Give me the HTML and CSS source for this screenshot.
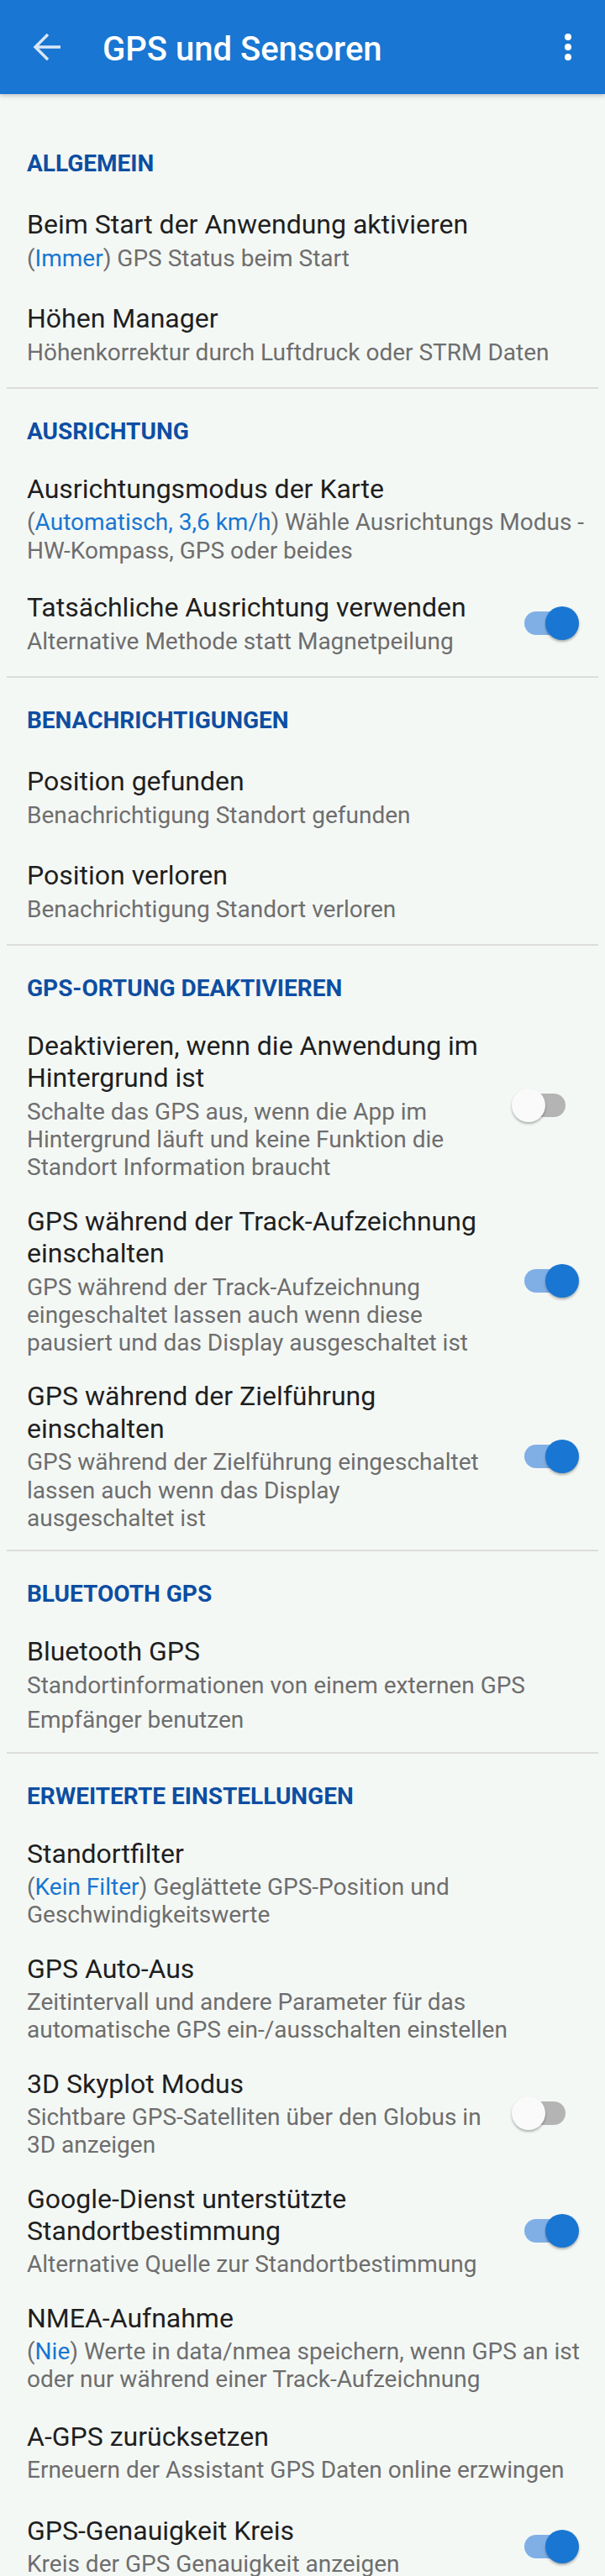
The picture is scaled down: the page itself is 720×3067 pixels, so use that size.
FILE: index.html
```html
<!DOCTYPE html>
<html lang="de">
  <head>
    <meta charset="UTF-8" />
    <meta name="viewport" content="width=device-width, initial-scale=1.0" />
    <title>GPS und Sensoren</title>
    <link rel="stylesheet" href="styles.css">
  </head>
  <body>
    <header class="appbar">
      <button class="appbar-icon back" aria-label="Zurück">
        <svg width="48" height="48" viewBox="0 0 48 48">
          <path d="M9 24H39 M24 9L9 24L24 39" fill="none" stroke="currentColor" stroke-width="3.4" />
        </svg>
      </button>
      <h1 class="appbar-title">GPS und Sensoren</h1>
      <button class="appbar-icon more" aria-label="Mehr">
        <svg width="48" height="48" viewBox="0 0 48 48" fill="currentColor">
          <circle cx="24" cy="12" r="4" />
          <circle cx="24" cy="24" r="4" />
          <circle cx="24" cy="36" r="4" />
        </svg>
      </button>
    </header>

    <main class="settings">
      <!-- Allgemein -->
      <section class="group">
        <h2 class="group-title">Allgemein</h2>
        <div class="pref">
          <div class="pref-text">
            <div class="pref-title">Beim Start der Anwendung aktivieren</div>
            <div class="pref-summary">(<span class="value">Immer</span>) GPS Status beim Start</div>
          </div>
        </div>
        <div class="pref">
          <div class="pref-text">
            <div class="pref-title">Höhen Manager</div>
            <div class="pref-summary">Höhenkorrektur durch Luftdruck oder STRM Daten</div>
          </div>
        </div>
      </section>
      <hr class="divider">

      <!-- Ausrichtung -->
      <section class="group">
        <h2 class="group-title">Ausrichtung</h2>
        <div class="pref">
          <div class="pref-text">
            <div class="pref-title">Ausrichtungsmodus der Karte</div>
            <div class="pref-summary">(<span class="value">Automatisch, 3,6 km/h</span>) Wähle Ausrichtungs Modus - HW-Kompass, GPS oder beides</div>
          </div>
        </div>
        <div class="pref has-switch">
          <div class="pref-text">
            <div class="pref-title">Tatsächliche Ausrichtung verwenden</div>
            <div class="pref-summary">Alternative Methode statt Magnetpeilung</div>
          </div>
          <div class="switch on"><span class="switch-track"></span><span class="switch-thumb"></span></div>
        </div>
      </section>
      <hr class="divider">

      <!-- Benachrichtigungen -->
      <section class="group">
        <h2 class="group-title">Benachrichtigungen</h2>
        <div class="pref">
          <div class="pref-text">
            <div class="pref-title">Position gefunden</div>
            <div class="pref-summary">Benachrichtigung Standort gefunden</div>
          </div>
        </div>
        <div class="pref">
          <div class="pref-text">
            <div class="pref-title">Position verloren</div>
            <div class="pref-summary">Benachrichtigung Standort verloren</div>
          </div>
        </div>
      </section>
      <hr class="divider">

      <!-- GPS-Ortung deaktivieren -->
      <section class="group">
        <h2 class="group-title">GPS-Ortung deaktivieren</h2>
        <div class="pref has-switch">
          <div class="pref-text">
            <div class="pref-title">Deaktivieren, wenn die Anwendung im Hintergrund ist</div>
            <div class="pref-summary">Schalte das GPS aus, wenn die App im Hintergrund läuft und keine Funktion die Standort Information braucht</div>
          </div>
          <div class="switch"><span class="switch-track"></span><span class="switch-thumb"></span></div>
        </div>
        <div class="pref has-switch">
          <div class="pref-text">
            <div class="pref-title">GPS während der Track-Aufzeichnung einschalten</div>
            <div class="pref-summary">GPS während der Track-Aufzeichnung eingeschaltet lassen auch wenn diese pausiert und das Display ausgeschaltet ist</div>
          </div>
          <div class="switch on"><span class="switch-track"></span><span class="switch-thumb"></span></div>
        </div>
        <div class="pref has-switch">
          <div class="pref-text">
            <div class="pref-title">GPS während der Zielführung einschalten</div>
            <div class="pref-summary">GPS während der Zielführung eingeschaltet lassen auch wenn das Display ausgeschaltet ist</div>
          </div>
          <div class="switch on"><span class="switch-track"></span><span class="switch-thumb"></span></div>
        </div>
      </section>
      <hr class="divider">

      <!-- Bluetooth GPS -->
      <section class="group">
        <h2 class="group-title">Bluetooth GPS</h2>
        <div class="pref">
          <div class="pref-text">
            <div class="pref-title">Bluetooth GPS</div>
            <div class="pref-summary">Standortinformationen von einem externen GPS <span class="next-line">Empfänger benutzen</span></div>
          </div>
        </div>
      </section>
      <hr class="divider">

      <!-- Erweiterte Einstellungen -->
      <section class="group">
        <h2 class="group-title">Erweiterte Einstellungen</h2>
        <div class="pref">
          <div class="pref-text">
            <div class="pref-title">Standortfilter</div>
            <div class="pref-summary">(<span class="value">Kein Filter</span>) Geglättete GPS-Position und Geschwindigkeitswerte</div>
          </div>
        </div>
        <div class="pref">
          <div class="pref-text">
            <div class="pref-title">GPS Auto-Aus</div>
            <div class="pref-summary">Zeitintervall und andere Parameter für das automatische GPS ein-/ausschalten einstellen</div>
          </div>
        </div>
        <div class="pref has-switch">
          <div class="pref-text">
            <div class="pref-title">3D Skyplot Modus</div>
            <div class="pref-summary">Sichtbare GPS-Satelliten über den Globus in 3D anzeigen</div>
          </div>
          <div class="switch"><span class="switch-track"></span><span class="switch-thumb"></span></div>
        </div>
        <div class="pref has-switch">
          <div class="pref-text">
            <div class="pref-title">Google-Dienst unterstützte Standortbestimmung</div>
            <div class="pref-summary">Alternative Quelle zur Standortbestimmung</div>
          </div>
          <div class="switch on"><span class="switch-track"></span><span class="switch-thumb"></span></div>
        </div>
        <div class="pref">
          <div class="pref-text">
            <div class="pref-title">NMEA-Aufnahme</div>
            <div class="pref-summary">(<span class="value">Nie</span>) Werte in data/nmea speichern, wenn GPS an ist oder nur während einer Track-Aufzeichnung</div>
          </div>
        </div>
        <div class="pref">
          <div class="pref-text">
            <div class="pref-title">A-GPS zurücksetzen</div>
            <div class="pref-summary">Erneuern der Assistant GPS Daten online erzwingen</div>
          </div>
        </div>
        <div class="pref has-switch">
          <div class="pref-text">
            <div class="pref-title">GPS-Genauigkeit Kreis</div>
            <div class="pref-summary">Kreis der GPS Genauigkeit anzeigen</div>
          </div>
          <div class="switch on"><span class="switch-track"></span><span class="switch-thumb"></span></div>
        </div>
      </section>
    </main>
  </body>
</html>
```

FILE: styles.css
```css
* {
  margin: 0;
  padding: 0;
  box-sizing: border-box;
}

html,
body {
  background: #f4f8f5;
  font-family: Roboto, "Noto Sans", sans-serif;
  overflow-x: hidden;
}

/* App bar */
.appbar {
  position: relative;
  z-index: 2;
  display: flex;
  align-items: center;
  height: 112px;
  padding: 0 20px 0 33px;
  background: #1976d2;
  color: #fff;
  box-shadow: 0 2px 5px rgba(0, 0, 0, 0.22);
}

.appbar-icon {
  display: flex;
  width: 48px;
  height: 48px;
  border: none;
  background: none;
  color: #fff;
}

.appbar-icon.back {
  color: #dae7f8;
}

.appbar-title {
  flex: 1;
  margin: 4px 0 0 41px;
  font-size: 40px;
  font-weight: 500;
  line-height: normal;
}

/* Settings list */
.settings {
  padding-top: 32px;
}

.group-title {
  padding: 34px 32px 19px;
  font-size: 28px;
  font-weight: 700;
  line-height: 33px;
  color: #0d4ea2;
  text-transform: uppercase;
}

.pref {
  display: flex;
  align-items: center;
  min-height: 112px;
  padding: 14px 12px 14px 32px;
}

.pref.has-switch {
  padding-right: 31px;
}

.pref-text {
  flex: 1;
  min-width: 0;
}

.pref-title {
  font-size: 32px;
  line-height: 38.4px;
  color: #1f1f1f;
}

.pref-summary {
  margin-top: 4px;
  font-size: 28px;
  line-height: 33.3px;
  color: #6e6e6e;
}

.pref-summary .value {
  color: #1976d2;
}

.pref-summary .next-line {
  display: block;
  margin-top: 8.4px;
}

.divider {
  height: 2px;
  margin: 7px 8px 0;
  border: none;
  background: #dcdcdc;
}

/* Switch */
.switch {
  position: relative;
  flex-shrink: 0;
  width: 80px;
  height: 40px;
  margin-left: 34px;
}

.switch-track {
  position: absolute;
  top: 6px;
  left: 15px;
  width: 49px;
  height: 28px;
  border-radius: 14px;
  background: #b4b4b4;
}

.switch-thumb {
  position: absolute;
  top: 0;
  left: 0;
  width: 40px;
  height: 40px;
  border-radius: 50%;
  background: #fafafa;
  box-shadow: 0 2px 3px rgba(0, 0, 0, 0.3);
}

.switch.on .switch-track {
  background: #80afe6;
}

.switch.on .switch-thumb {
  left: 40px;
  background: #1976d2;
}
```
